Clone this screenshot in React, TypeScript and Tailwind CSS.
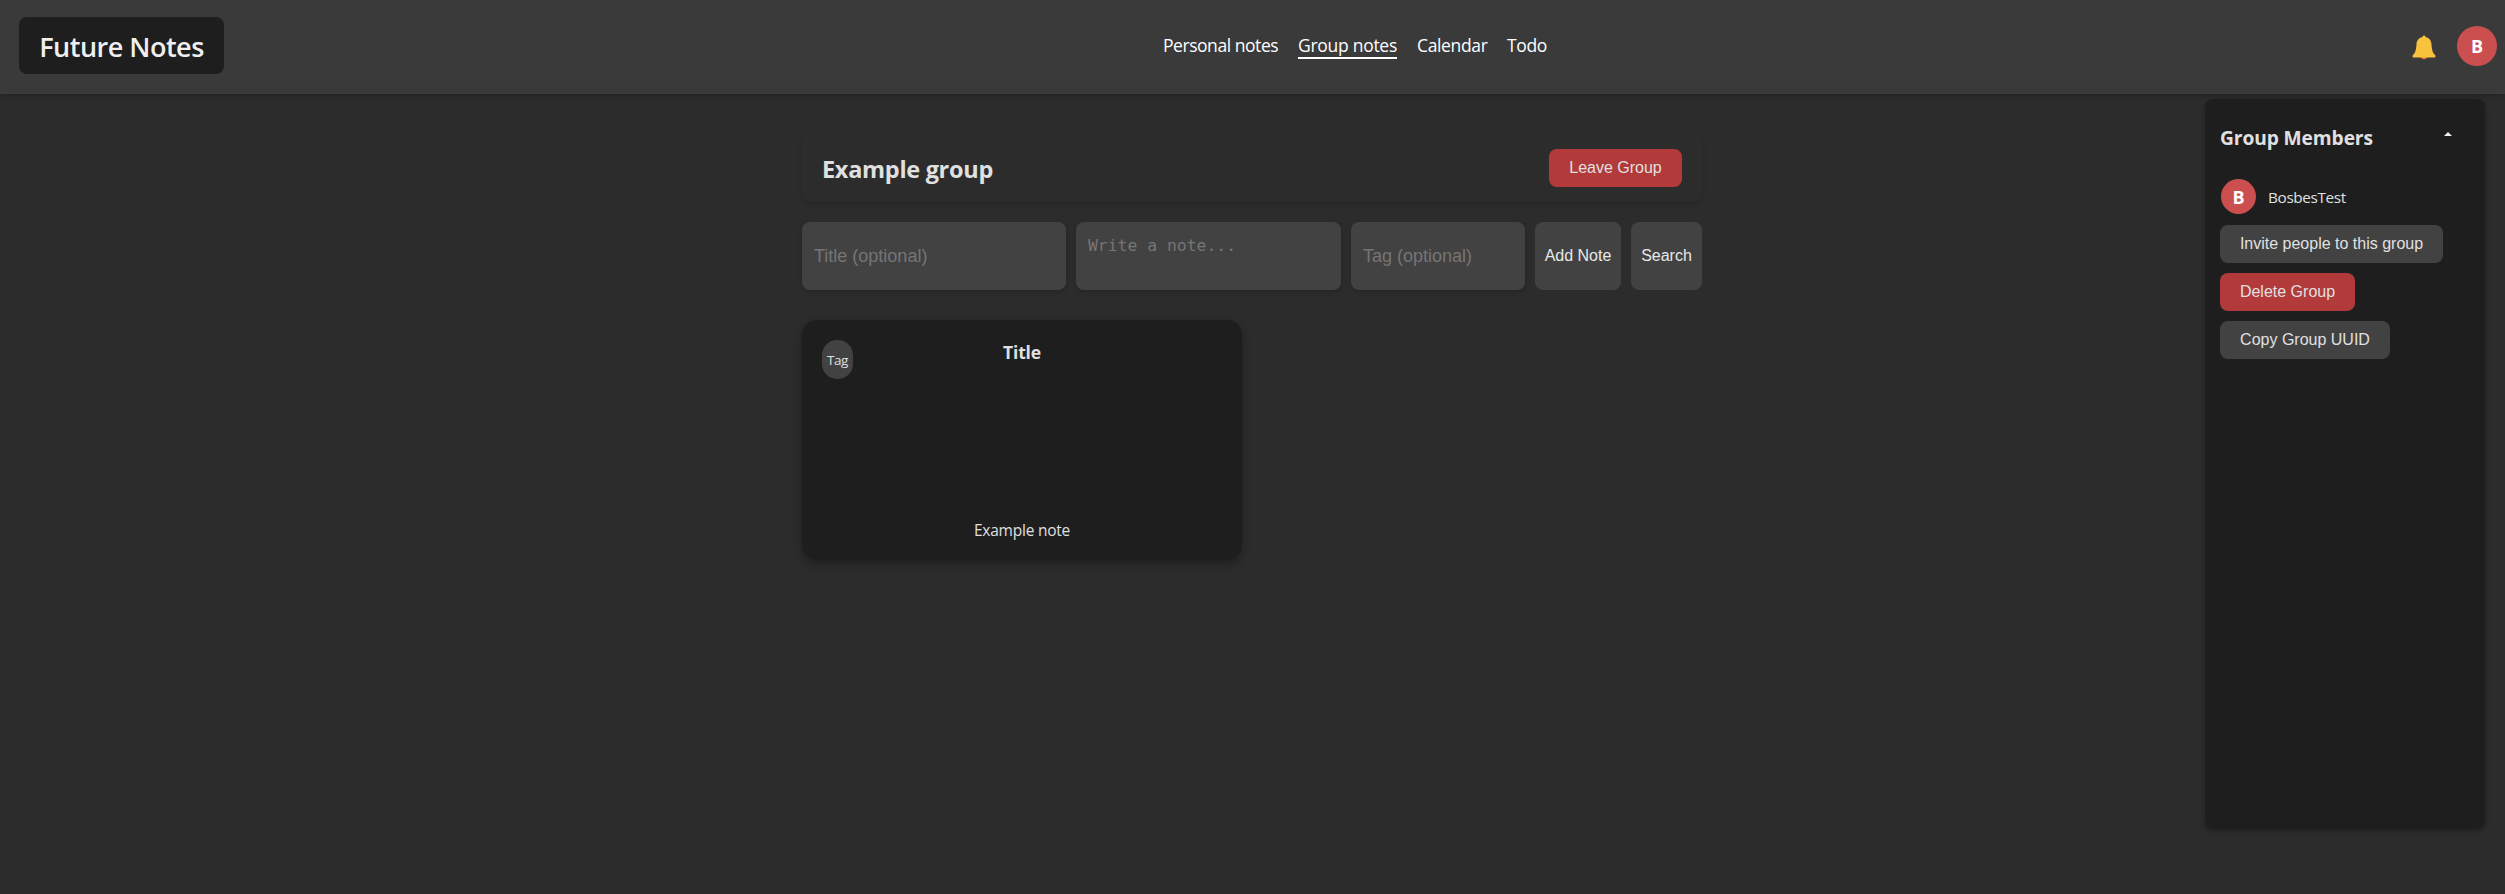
import type { ReactNode } from "react";

const navItems = [
  { label: "Personal notes", style: "w-[115px] tracking-[-0.45px]" },
  { label: "Group notes", style: "w-[99px] tracking-[-0.28px]", active: true },
  { label: "Calendar", style: "w-[70px] tracking-[-0.35px]" },
  { label: "Todo", style: "w-[40px] tracking-[-0.35px]" },
];

function Bell() {
  return (
    <svg viewBox="0 0 24 26" className="h-[26px] w-6" aria-hidden="true">
      <path d="M9 21.5h6c0 1.8-1.2 2.7-3 2.7s-3-.9-3-2.7z" fill="#f4792b" />
      <path
        d="M12 .5c.9 0 1.500.7 1.400 1.500 3.700.7 5.900 3.500 6.100 7.200.3 5.600 1.200 8.800 3.600 10.900.7.700.5 2.400-.5 2.400H1.400c-1 0-1.200-1.700-.5-2.400 2.400-2.100 3.300-5.300 3.600-10.900.2-3.700 2.400-6.500 6.100-7.200C10.500 1.200 11.100.5 12 .5z"
        fill="#f9c23c"
      />
    </svg>
  );
}

function Button({ children, danger, width }: { children: ReactNode; danger?: boolean; width: string }) {
  return (
    <button
      className={`h-[38px] shrink-0 rounded-lg pb-px text-center font-['Liberation_Sans',sans-serif] text-base leading-[18px] whitespace-nowrap text-[#e0e0e0] ${danger ? "bg-[#b23a3a]" : "bg-[#424242]"} ${width}`}
    >
      {children}
    </button>
  );
}

function Header() {
  return (
    <header className="relative z-10 grid h-[94px] grid-cols-[1162px_auto_1fr] bg-[#3a3a3a] pr-2 shadow-[0_2px_5px_rgba(0,0,0,0.2)]">
      <div className="mt-[17px] ml-[19px] flex h-[57px] w-[205px] items-center justify-center rounded-lg bg-[#1e1e1e] text-[27px] leading-[37px] font-semibold tracking-[-0.5px] whitespace-nowrap text-[#f0f0f0]">
        <span className="pt-0.5">Future Notes</span>
      </div>
      <nav className="flex gap-5 pt-[33px] pl-px text-[17.5px] leading-6 text-white">
        {navItems.map((item) => (
          <a key={item.label} className={`h-[26px] whitespace-nowrap ${item.style} ${item.active ? "border-b-2 border-white" : ""}`}>
            {item.label}
          </a>
        ))}
      </nav>
      <div className="flex justify-end gap-[21px] pt-[26px]">
        <div className="pt-[9px]">
          <Bell />
        </div>
        <div className="flex size-10 items-center justify-center rounded-full bg-[#cb4f4f] pt-px text-[18px] font-bold text-white">B</div>
      </div>
    </header>
  );
}

function NoteForm() {
  return (
    <form className="mt-5 flex h-[68px] gap-[10px] font-['Liberation_Sans',sans-serif]">
      <input
        placeholder="Title (optional)"
        className="w-[264px] rounded-lg bg-[#424242] px-3 text-[18px] shadow-[0_2px_5px_rgba(0,0,0,0.15)] placeholder:text-[#757575]"
      />
      <textarea
        placeholder="Write a note..."
        className="w-[265px] resize-none rounded-lg bg-[#424242] px-3 py-[13px] font-['DejaVu_Sans_Mono',monospace] text-[16.4px] leading-[22px] shadow-[0_2px_5px_rgba(0,0,0,0.15)] placeholder:text-[#757575]"
      />
      <input
        placeholder="Tag (optional)"
        className="w-[174px] rounded-lg bg-[#424242] px-3 text-[18px] shadow-[0_2px_5px_rgba(0,0,0,0.15)] placeholder:text-[#757575]"
      />
      <button type="button" className="w-[86px] rounded-lg bg-[#424242] text-base whitespace-nowrap text-[#e8e8e8]">
        Add Note
      </button>
      <button type="button" className="w-[71px] rounded-lg bg-[#424242] text-base text-[#e8e8e8]">
        Search
      </button>
    </form>
  );
}

function NoteCard() {
  return (
    <article className="mt-[30px] grid h-[240px] w-[440px] grid-cols-[31px_1fr_31px] grid-rows-[1fr_auto] rounded-[15px] bg-[#1e1e1e] px-5 pt-5 pb-[19px] text-[#e0e0e0] shadow-[0_4px_10px_rgba(0,0,0,0.3)]">
      <span className="flex h-[39px] items-center justify-center rounded-[15px] bg-[#424242] pt-0.5 text-[13.5px] tracking-[-0.5px]">Tag</span>
      <h3 className="-mt-px text-center text-[17.5px] leading-[26px] font-bold tracking-[-0.2px]">Title</h3>
      <p className="col-span-3 text-center text-[15.5px] leading-[22px] tracking-[-0.22px]">Example note</p>
    </article>
  );
}

function Members() {
  return (
    <aside className="mt-[5px] mr-5 flex h-[730px] w-[280px] shrink-0 flex-col items-start rounded-lg bg-[#1e1e1e] px-[15px] text-[#e0e0e0] shadow-[0_2px_5px_rgba(0,0,0,0.3)]">
      <div className="flex w-full justify-between pt-[26px] pr-[17px]">
        <h3 className="text-[19.2px] leading-[26px] font-bold tracking-[-0.1px] whitespace-nowrap">Group Members</h3>
        <svg viewBox="0 0 8 4" className="mt-[7px] mr-px h-1 w-2" aria-hidden="true">
          <path d="M0 4 4 0l4 4z" fill="#f0f0f0" />
        </svg>
      </div>
      <div className="mt-[28px] flex h-[35px] items-center pl-px">
        <div className="flex size-[35px] items-center justify-center rounded-full bg-[#cb4f4f] pt-0.5 text-[18px] font-bold text-white">B</div>
        <span className="pl-[12px] text-[15.3px] leading-[22px] tracking-[-0.35px]">BosbesTest</span>
      </div>
      <div className="mt-[11px] flex flex-col items-start gap-[10px]">
        <Button width="w-[223px]">Invite people to this group</Button>
        <Button danger width="w-[135px]">Delete Group</Button>
        <Button width="w-[170px]">Copy Group UUID</Button>
      </div>
    </aside>
  );
}

export default function App() {
  return (
    <div className="h-[894px] overflow-hidden bg-[#2c2c2c] font-['Open_Sans',sans-serif]">
      <Header />
      <div className="flex justify-between">
        <main className="ml-[802px] w-[900px] pt-[39px]">
          <section className="flex h-[69px] items-start justify-between rounded-lg px-5 pt-4 shadow-[0_2px_5px_rgba(0,0,0,0.15)]">
            <h2 className="pt-[3px] text-[23.5px] leading-[34px] font-bold tracking-[-0.3px] text-[#e0e0e0]">Example group</h2>
            <Button danger width="w-[133px]">Leave Group</Button>
          </section>
          <NoteForm />
          <NoteCard />
        </main>
        <Members />
      </div>
    </div>
  );
}
